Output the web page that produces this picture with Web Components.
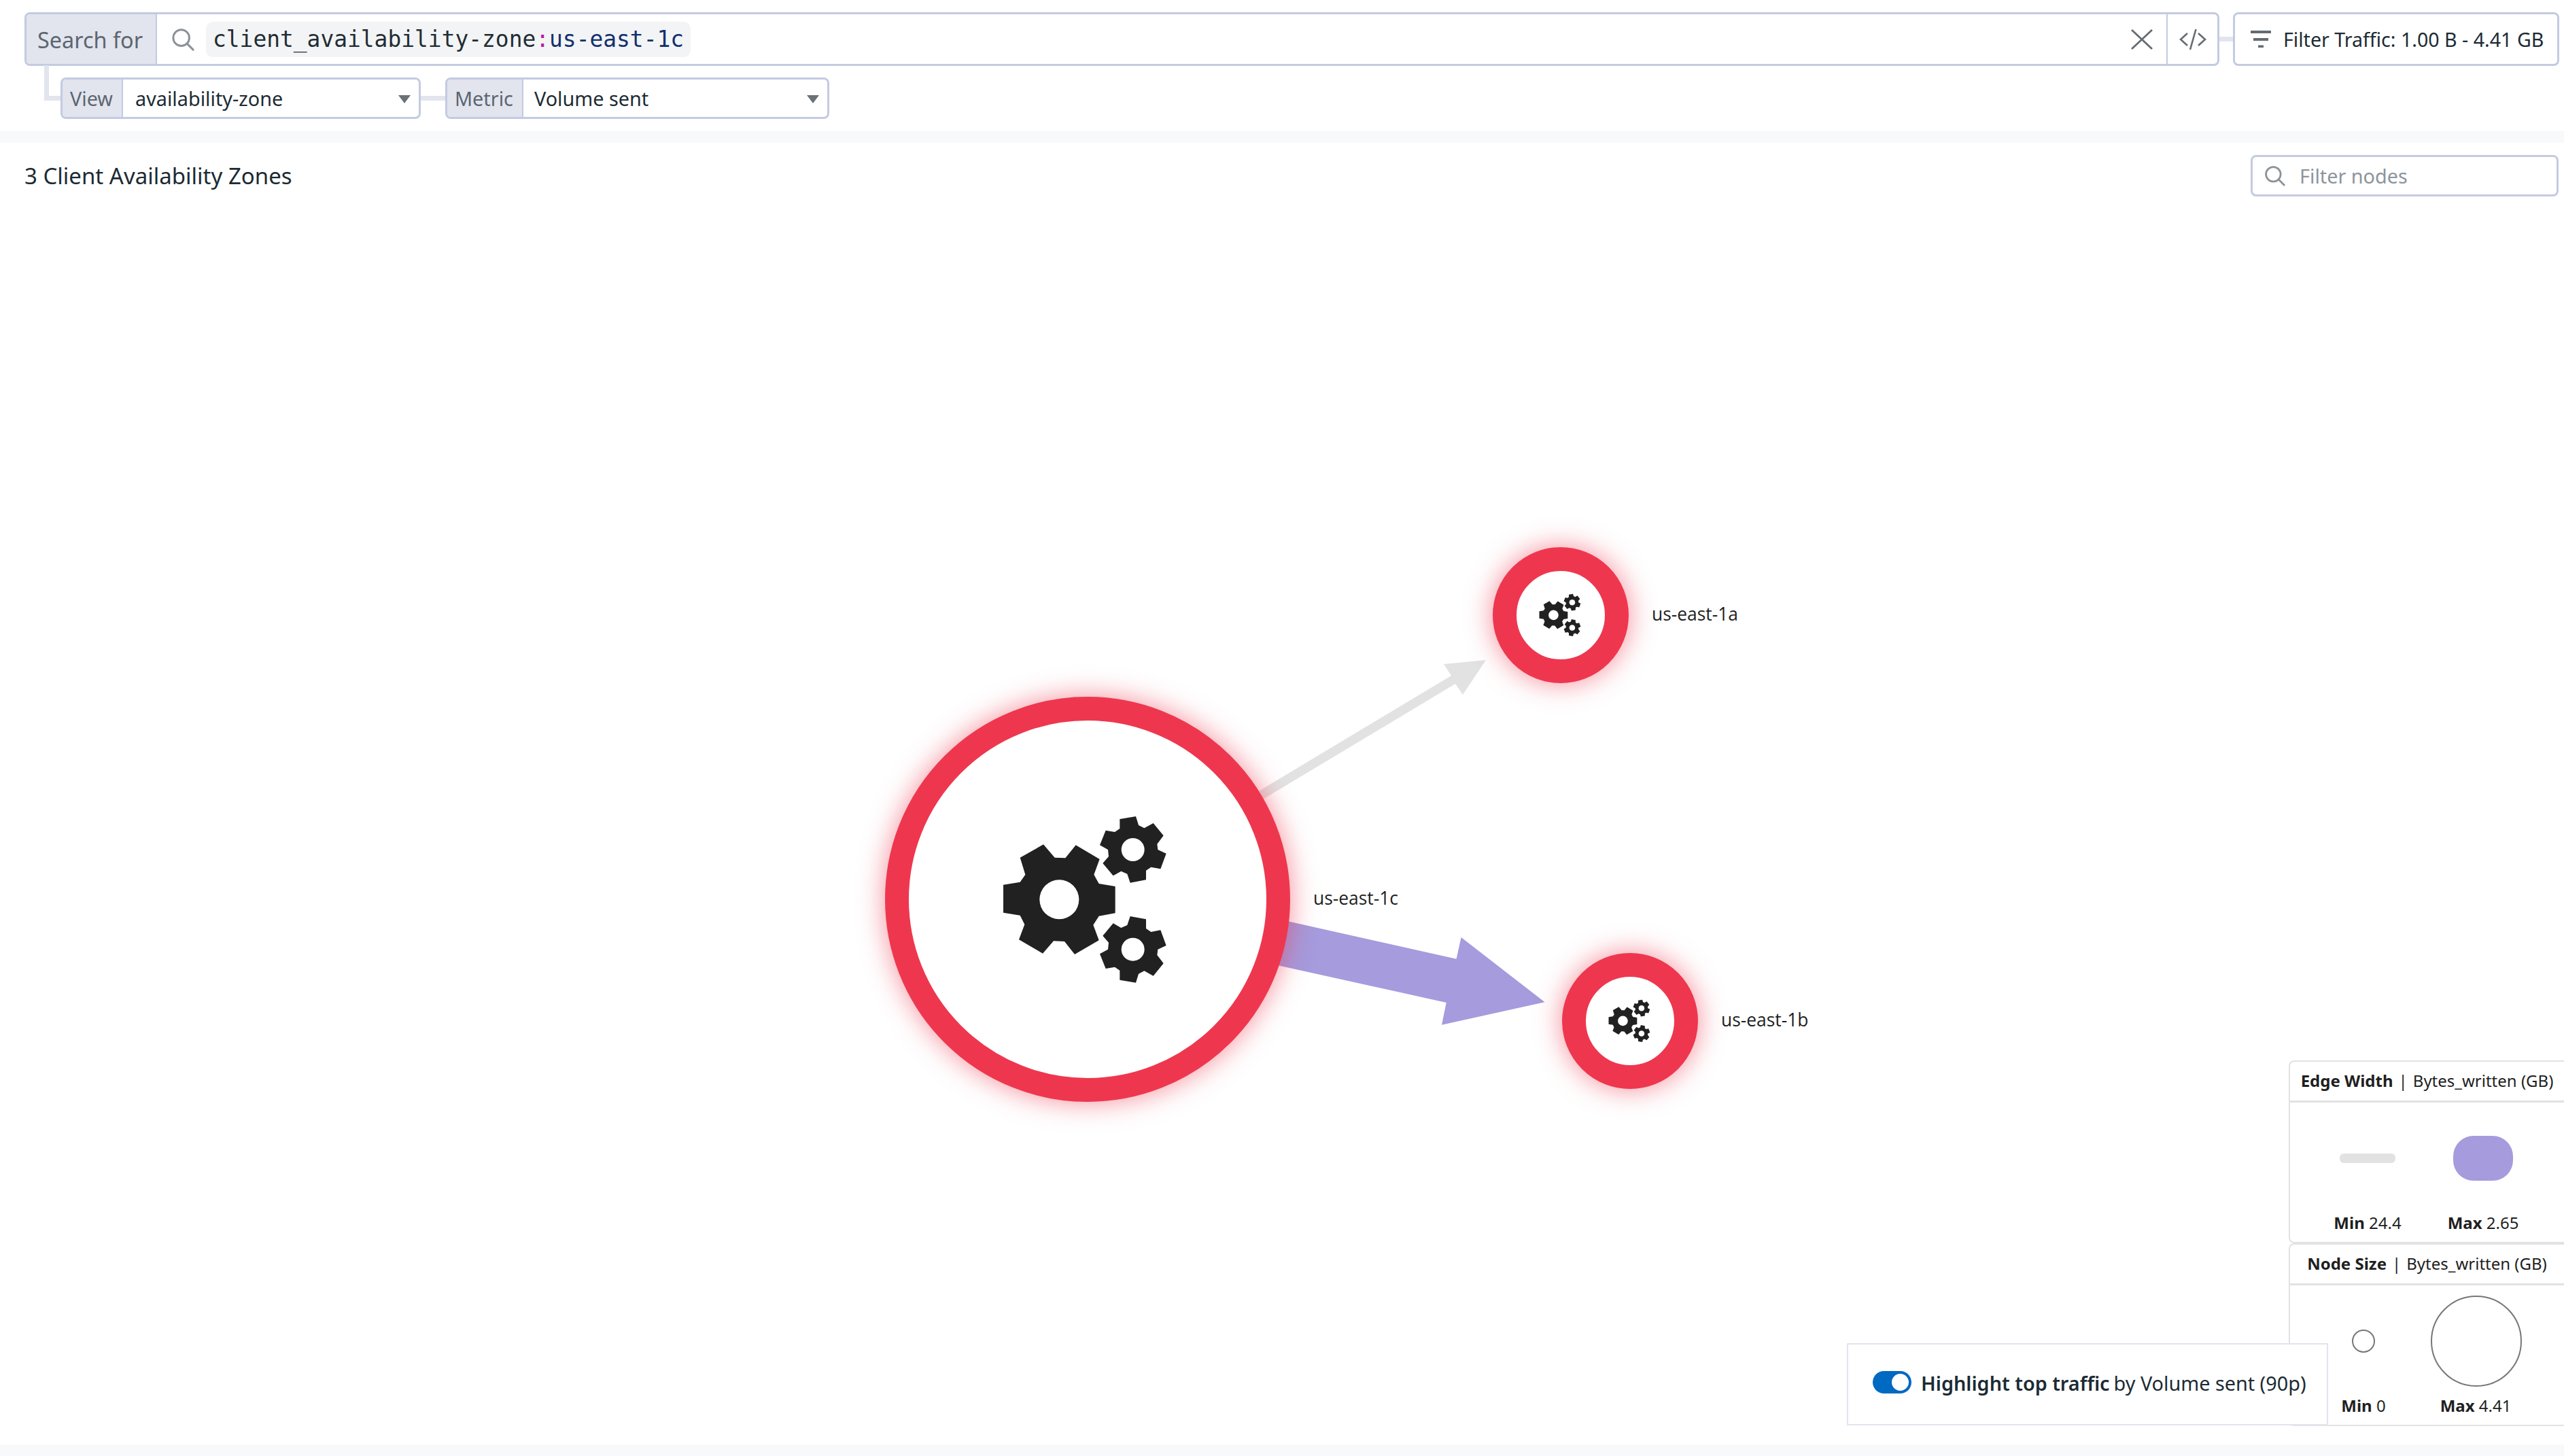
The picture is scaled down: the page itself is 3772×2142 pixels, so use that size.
<!DOCTYPE html>
<html>
<head>
<meta charset="utf-8">
<title>Client Availability Zones</title>
<style>
    html, body { margin: 0; padding: 0; background: #fff; }
    body {
        width: 3772px;
        height: 2142px;
        overflow: hidden;
        font-family: "Noto Sans", sans-serif;
        color: #1c2b34;
        display: flex;
        flex-direction: column;
    }
</style>
</head>
<body>
    <map-toolbar></map-toolbar>
    <map-band></map-band>
    <map-header></map-header>
    <map-canvas>
        <net-edge slot="edges"></net-edge>
        <net-node x="1600" y="1323" r="298" label="us-east-1c"></net-node>
        <net-node x="2296" y="905" r="100" label="us-east-1a"></net-node>
        <net-node x="2398" y="1502" r="100" label="us-east-1b"></net-node>
        <map-legend></map-legend>
        <traffic-toggle></traffic-toggle>
    </map-canvas>
    <map-band></map-band>

<script>
    const icons = {
        search: `<svg viewBox="0 0 36 36" fill="none" stroke="currentColor" stroke-width="3.2"><circle cx="15.5" cy="15.5" r="12.5"/><line x1="24.5" y1="24.5" x2="34" y2="34" stroke-linecap="round"/></svg>`,
        close: `<svg viewBox="0 0 32 30" stroke="currentColor" stroke-width="2.8" fill="none"><path d="M1 1 L31 29 M31 1 L1 29"/></svg>`,
        code: `<svg viewBox="0 0 40 30" stroke="currentColor" stroke-width="2.6" fill="none"><path d="M12 6 L2 15 L12 24 M28 6 L38 15 L28 24 M24.5 0 L16 30"/></svg>`,
        filter: `<svg viewBox="0 0 30 25" fill="currentColor"><rect x="0" y="0" width="30" height="4"/><rect x="4" y="11" width="22" height="4"/><rect x="11" y="21.5" width="8" height="3.5"/></svg>`,
    };

    class MapToolbar extends HTMLElement {
        constructor() {
            super();
            this.attachShadow({ mode: "open" });
            this.shadowRoot.innerHTML = `
                <style>
                    :host {
                        display: block;
                        padding: 18px 7px 18px 36px;
                        height: 193px;
                        box-sizing: border-box;
                        font-size: 28.8px;
                        position: relative;
                        flex: none;
                    }
                    .row { display: flex; align-items: stretch; height: 79px; }
                    .box {
                        display: flex;
                        align-items: stretch;
                        box-sizing: border-box;
                        border: 3px solid #c3cbe1;
                        border-radius: 8px;
                        background: #fff;
                    }
                    .search { flex: 1; }
                    .tag {
                        display: flex;
                        align-items: center;
                        background: #e2e4ee;
                        color: #5c6670;
                        border-right: 2px solid #c3cbe1;
                        border-radius: 5px 0 0 5px;
                    }
                    .search .tag { width: 192px; padding-left: 16px; box-sizing: border-box; font-size: 32.4px; }
                    .mag { width: 34px; height: 34px; margin: 0 0 0 21px; color: #8c9298; align-self: center; display: flex; }
                    .query {
                        align-self: center;
                        height: 52px;
                        margin-left: 17px;
                        padding: 0 10px;
                        background: #f3f4f5;
                        border-radius: 10px;
                        display: flex;
                        align-items: center;
                        font-family: "DejaVu Sans Mono", monospace;
                        font-size: 32.9px;
                        color: #1f2d36;
                        white-space: pre;
                    }
                    .query b { font-weight: 400; color: #c2189b; }
                    .query i { font-style: normal; color: #12306e; }
                    .grow { flex: 1; }
                    .close { width: 32px; height: 30px; color: #656c72; align-self: center; margin-right: 20px; display: flex; }
                    .code {
                        width: 73px;
                        border-left: 2px solid #c3cbe1;
                        color: #656c72;
                        display: flex;
                        align-items: center;
                        justify-content: center;
                    }
                    .code svg { width: 40px; height: 30px; }
                    .wire-h { width: 20px; height: 7px; background: #e2e4ee; align-self: center; flex: none; }
                    .traffic {
                        width: 480px;
                        flex: none;
                        align-items: center;
                        font-size: 28.6px;
                        color: #1c2b34;
                        white-space: nowrap;
                    }
                    .traffic .fi { width: 30px; height: 25px; color: #656c72; margin: 0 18px 0 23px; display: flex; }
                    .row2 { display: flex; align-items: center; height: 61px; margin: 17px 0 0 53px; }
                    .sel { height: 61px; }
                    .sel .tag { padding: 0 0 0 11px; box-sizing: border-box; }
                    .sel .val { flex: 1; display: flex; align-items: center; color: #1c2b34; white-space: nowrap; }
                    .caret { width: 0; height: 0; border: 9.5px solid transparent; border-top: 12px solid #6a7177; border-bottom: 0; align-self: center; margin-right: 12px; margin-top: 2px; }
                    .view { width: 530px; }
                    .metric { width: 565px; }
                    .view .tag { width: 89px; }
                    .view .val { padding-left: 18px; }
                    .metric .tag { width: 112px; }
                    .metric .val { padding-left: 16px; }
                    .wire-v {
                        position: absolute;
                        left: 65px;
                        top: 96px;
                        width: 24px;
                        height: 52px;
                        box-sizing: border-box;
                        border-left: 7px solid #e2e4ee;
                        border-bottom: 7px solid #e2e4ee;
                    }
                    .wire-m { width: 36px; height: 7px; background: #e2e4ee; }
                </style>
                <div class="wire-v"></div>
                <div class="row">
                    <div class="box search">
                        <div class="tag">Search for</div>
                        <span class="mag">${icons.search}</span>
                        <div class="query">client_availability-zone<b>:</b><i>us-east-1c</i></div>
                        <div class="grow"></div>
                        <span class="close">${icons.close}</span>
                        <div class="code">${icons.code}</div>
                    </div>
                    <div class="wire-h"></div>
                    <div class="box traffic">
                        <span class="fi">${icons.filter}</span>Filter Traffic: 1.00 B - 4.41 GB
                    </div>
                </div>
                <div class="row2">
                    <div class="box sel view"><div class="tag">View</div><div class="val">availability-zone</div><span class="caret"></span></div>
                    <div class="wire-m"></div>
                    <div class="box sel metric"><div class="tag">Metric</div><div class="val">Volume sent</div><span class="caret"></span></div>
                </div>
            `;
        }
    }

    class MapBand extends HTMLElement {
        constructor() {
            super();
            this.attachShadow({ mode: "open" });
            this.shadowRoot.innerHTML = `<style>:host { display: block; height: 17px; background: #f8f9fa; flex: none; }</style>`;
        }
    }

    class MapHeader extends HTMLElement {
        constructor() {
            super();
            this.attachShadow({ mode: "open" });
            this.shadowRoot.innerHTML = `
                <style>
                    :host {
                        display: flex;
                        align-items: center;
                        justify-content: space-between;
                        padding: 18px 8px 0 36px;
                        height: 61px;
                        flex: none;
                    }
                    .title { font-size: 33px; color: #1c2b34; }
                    .filter {
                        width: 453px;
                        height: 61px;
                        box-sizing: border-box;
                        border: 3px solid #c3cbe1;
                        border-radius: 8px;
                        display: flex;
                        align-items: center;
                        padding-left: 17px;
                        font-size: 28.8px;
                        color: #8d949c;
                    }
                    .filter span { width: 31px; height: 31px; margin-right: 21px; display: flex; color: #8c9298; }
                </style>
                <div class="title">3 Client Availability Zones</div>
                <div class="filter"><span>${icons.search}</span>Filter nodes</div>
            `;
        }
    }

    // free canvas: everything in here is placed by page coordinates minus the canvas origin
    const CANVAS_TOP = 289;

    class MapCanvas extends HTMLElement {
        constructor() {
            super();
            this.attachShadow({ mode: "open" });
            this.shadowRoot.innerHTML = `
                <style>
                    :host { display: block; position: relative; flex: 1; min-height: 0; }
                </style>
                <slot name="edges"></slot>
                <slot></slot>
            `;
        }
    }

    class NetEdge extends HTMLElement {
        constructor() {
            super();
            this.attachShadow({ mode: "open" });
            this.shadowRoot.innerHTML = `
                <style>
                    :host { position: absolute; left: 0; top: ${-CANVAS_TOP}px; width: 3772px; height: 2142px; }
                    svg { display: block; }
                </style>
                <svg width="3772" height="2142" viewBox="0 0 3772 2142">
                    <polygon fill="#e2e2e2" points="1850,1165 2135,994 2124,977 2186,971 2152,1022 2141,1006 1856,1177"/>
                    <polygon fill="#a59bdd" points="1880,1352 2142.5,1410.7 2149.6,1379 2272.5,1474.3 2121,1507.7 2127.7,1475 1870,1418"/>
                </svg>
            `;
        }
    }

    const gearPoints = {
        big: "245,215 292,217 338,160 443,222 418,290 440,330 512,342 512,460 440,473 415,512 440,580 333,642 288,585 240,583 192,638 87,577 112,510 92,470 18,458 18,335 92,323 115,290 92,215 195,157",
        small: "532,45 603,33 615,72 640,85 680,63 725,118 697,155 700,180 737,197 712,265 670,257 648,272 648,313 578,326 565,287 538,275 503,295 457,240 483,210 480,180 444,160 470,95 510,102 532,87",
    };

    class NetNode extends HTMLElement {
        connectedCallback() {
            const x = +this.getAttribute("x");
            const y = +this.getAttribute("y");
            const r = +this.getAttribute("r");
            const label = this.getAttribute("label");
            // the icon scales with the node: 260px wide on the big one, 66px on the small ones
            const iconW = r > 200 ? 260 : 66;
            if (!this.shadowRoot) this.attachShadow({ mode: "open" });
            this.shadowRoot.innerHTML = `
                <style>
                    :host {
                        position: absolute;
                        left: ${x - r}px;
                        top: ${y - r - CANVAS_TOP}px;
                        width: ${r * 2}px;
                        height: ${r * 2}px;
                    }
                    .ring {
                        width: 100%;
                        height: 100%;
                        box-sizing: border-box;
                        border: 35px solid #ee374e;
                        border-radius: 50%;
                        background: #fff;
                        box-shadow: 0 0 36px 3px rgba(238, 55, 78, 0.5);
                        display: flex;
                        align-items: center;
                        justify-content: center;
                    }
                    svg { width: ${iconW}px; display: block; }
                    .label {
                        position: absolute;
                        left: ${r * 2 + 34}px;
                        top: 50%;
                        transform: translateY(calc(-50% - 2px));
                        font-family: "Open Sans", sans-serif;
                        font-size: 26.4px;
                        color: #1f1f1f;
                        white-space: nowrap;
                    }
                </style>
                <div class="ring">
                    <svg viewBox="0 0 780 800" fill="#212121" fill-rule="evenodd">
                        <polygon points="${gearPoints.big}"/>
                        <circle cx="265" cy="400" r="87" fill="#fff"/>
                        <polygon points="${gearPoints.small}"/>
                        <circle cx="590" cy="180" r="51" fill="#fff"/>
                        <g transform="matrix(1 0 0 -1 0 800)">
                            <polygon points="${gearPoints.small}"/>
                            <circle cx="590" cy="180" r="51" fill="#fff"/>
                        </g>
                    </svg>
                </div>
                <div class="label">${label}</div>
            `;
        }
    }

    class LegendPanel extends HTMLElement {
        constructor() {
            super();
            this.attachShadow({ mode: "open" });
            this.shadowRoot.innerHTML = `
                <style>
                    :host {
                        display: block;
                        box-sizing: border-box;
                        height: 269px;
                        border: 2px solid #e2e2e2;
                        border-right: 0;
                        border-radius: 8px 0 0 8px;
                        background: #fff;
                        font-size: 24px;
                        color: #1f1f1f;
                    }
                    .head {
                        box-sizing: border-box;
                        height: 60px;
                        padding-bottom: 3px;
                        border-bottom: 3px solid #e2e2e2;
                        display: flex;
                        align-items: center;
                        justify-content: center;
                        white-space: nowrap;
                    }
                    .head b { font-weight: 700; }
                    .head i { font-style: normal; margin: 0 8px; }
                    .body { position: relative; height: 205px; }
                </style>
                <div class="head"><b><slot name="title"></slot></b><i>|</i>Bytes_written (GB)</div>
                <div class="body"><slot></slot></div>
            `;
        }
    }

    class LegendItem extends HTMLElement {
        connectedCallback() {
            if (!this.shadowRoot) this.attachShadow({ mode: "open" });
            this.shadowRoot.innerHTML = `
                <style>
                    :host {
                        position: absolute;
                        left: ${this.getAttribute("cx")}px;
                        bottom: 12px;
                        width: 0;
                        display: flex;
                        justify-content: center;
                    }
                    .t { white-space: nowrap; }
                    b { font-weight: 700; }
                </style>
                <div class="t"><b>${this.getAttribute("name")}</b> ${this.getAttribute("value")}</div>
            `;
        }
    }

    class MapLegend extends HTMLElement {
        constructor() {
            super();
            this.attachShadow({ mode: "open" });
            this.shadowRoot.innerHTML = `
                <style>
                    :host {
                        position: absolute;
                        left: 3367px;
                        top: ${1560 - CANVAS_TOP}px;
                        width: 405px;
                        display: flex;
                        flex-direction: column;
                    }
                    .shape { position: absolute; box-sizing: border-box; }
                    .e1 { left: 73px; top: 75px; width: 82px; height: 14px; background: #e2e2e2; border-radius: 6px; }
                    .e2 { left: 240px; top: 49px; width: 88px; height: 66px; background: #a59bdd; border-radius: 30px; }
                    .n1 { left: 91px; top: 65px; width: 34px; height: 34px; border: 2px solid #777; border-radius: 50%; }
                    .n2 { left: 207px; top: 15px; width: 134px; height: 134px; border: 2px solid #777; border-radius: 50%; }
                </style>
                <legend-panel>
                    <span slot="title">Edge Width</span>
                    <div class="shape e1"></div>
                    <div class="shape e2"></div>
                    <legend-item cx="114" name="Min" value="24.4"></legend-item>
                    <legend-item cx="284" name="Max" value="2.65"></legend-item>
                </legend-panel>
                <legend-panel>
                    <span slot="title">Node Size</span>
                    <div class="shape n1"></div>
                    <div class="shape n2"></div>
                    <legend-item cx="108" name="Min" value="0"></legend-item>
                    <legend-item cx="273" name="Max" value="4.41"></legend-item>
                </legend-panel>
            `;
        }
    }

    class TrafficToggle extends HTMLElement {
        constructor() {
            super();
            this.attachShadow({ mode: "open" });
            this.shadowRoot.innerHTML = `
                <style>
                    :host {
                        position: absolute;
                        left: 2717px;
                        top: ${1976 - CANVAS_TOP}px;
                        width: 708px;
                        height: 121px;
                        box-sizing: border-box;
                        border: 2px solid #e2e4ee;
                        background: #fff;
                        display: flex;
                        align-items: center;
                        padding: 0 0 4px 36px;
                        font-size: 28.8px;
                        color: #1c2b34;
                        white-space: nowrap;
                    }
                    .switch {
                        width: 57px;
                        height: 33px;
                        border-radius: 17px;
                        background: #0069c2;
                        margin: 0 14px 2px 0;
                        position: relative;
                        flex: none;
                    }
                    .switch::after {
                        content: "";
                        position: absolute;
                        right: 4px;
                        top: 4px;
                        width: 25px;
                        height: 25px;
                        border-radius: 50%;
                        background: #fff;
                    }
                    b { font-weight: 600; margin-right: 6px; }
                </style>
                <span class="switch"></span><b>Highlight top traffic</b>by Volume sent (90p)
            `;
        }
    }

    customElements.define("map-toolbar", MapToolbar);
    customElements.define("map-band", MapBand);
    customElements.define("map-header", MapHeader);
    customElements.define("map-canvas", MapCanvas);
    customElements.define("net-edge", NetEdge);
    customElements.define("net-node", NetNode);
    customElements.define("legend-panel", LegendPanel);
    customElements.define("legend-item", LegendItem);
    customElements.define("map-legend", MapLegend);
    customElements.define("traffic-toggle", TrafficToggle);
</script>
</body>
</html>
